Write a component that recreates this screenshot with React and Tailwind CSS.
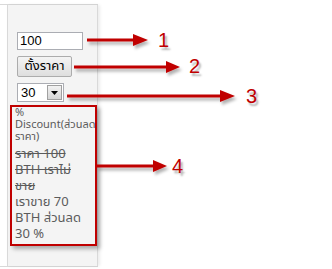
import React from "react";

const THAI = "font-['Tahoma','Noto_Sans_Thai','Noto_Sans','DejaVu_Sans',sans-serif]";

function Arrows() {
  // annotation arrows drawn over the page
  const arrows = [
    { x1: 87, x2: 135, y: 40, head: 133, tip: 148 },
    { x1: 74, x2: 168, y: 67, head: 166, tip: 180 },
    { x1: 67, x2: 222, y: 96, head: 220, tip: 235 },
    { x1: 97, x2: 155, y: 166, head: 153, tip: 167 },
  ];
  return (
    <svg className="absolute inset-0 pointer-events-none" width="332" height="269">
      <defs>
        <filter id="sh" x="-20%" y="-50%" width="140%" height="250%">
          <feDropShadow dx="2" dy="3" stdDeviation="1.5" floodColor="#000" floodOpacity="0.3" />
        </filter>
      </defs>
      {arrows.map((a, i) => (
        <g key={i} filter="url(#sh)" fill="#c00000">
          <rect x={a.x1} y={a.y - 1.5} width={a.x2 - a.x1} height="3" />
          <polygon points={`${a.head},${a.y - 6} ${a.tip},${a.y} ${a.head},${a.y + 6}`} />
        </g>
      ))}
    </svg>
  );
}

const labels = [
  { n: "1", cls: "left-[158px] top-[30px]" },
  { n: "2", cls: "left-[189px] top-[56px]" },
  { n: "3", cls: "left-[246px] top-[86px]" },
  { n: "4", cls: "left-[172px] top-[156px]" },
];

export default function App() {
  return (
    <div className="relative w-[332px] h-[269px] bg-white overflow-hidden">
      {/* table row lines */}
      <div className="mt-[4px] w-[98px] border-y border-[#d9d9d9]">
        <div className="ml-[7px] w-[91px] h-[261px] border-x border-[#d9d9d9] bg-[#f4f4f4] shadow-[2px_0_3px_rgba(0,0,0,0.08)]">
          <div className="flex flex-col pt-[27px]">
            <div className="ml-[9px] w-[66px] h-[18px] bg-white border border-[#abadb3] flex items-center pl-[2px] text-[13px] text-black font-['Liberation_Sans',sans-serif]">
              100
            </div>
            <button className={`ml-[9px] mt-[6px] w-[55px] h-[21px] rounded-[2px] border border-[#acacac] bg-gradient-to-b from-[#f4f4f4] to-[#dedede] text-[13px] text-black leading-none ${THAI}`}>
              ตั้งราคา
            </button>
            <div className="ml-[9px] mt-[6px] w-[47px] h-[19px] bg-white border border-[#abadb3] flex items-center justify-between font-['Liberation_Sans',sans-serif]">
              <span className="pl-[3px] text-[13px] text-black">30</span>
              <span className="mr-px w-[15px] h-[15px] border border-[#a0a0a0] bg-gradient-to-b from-[#f2f2f2] to-[#d5d5d5] flex items-center justify-center">
                <svg width="7" height="4" viewBox="0 0 7 4">
                  <polygon points="0,0 7,0 3.5,4" fill="#000" />
                </svg>
              </span>
            </div>
            <div className={`ml-[2px] mt-[3px] w-[87px] h-[141px] border-2 border-[#c00000] shadow-[3px_3px_4px_rgba(0,0,0,0.3)] pl-[3px] text-[#5b5b5b] ${THAI}`}>
              <div className="text-[11px] leading-[12px]">
                <div>%</div>
                <div className="whitespace-nowrap">Discount(ส่วนลด</div>
                <div>ราคา)</div>
              </div>
              <div className="mt-[3px] text-[13px] leading-[16px]">
                <div className="line-through">ราคา 100</div>
                <div className="line-through">BTH เราไม่</div>
                <div className="line-through">ขาย</div>
                <div>เราขาย 70</div>
                <div>BTH ส่วนลด</div>
                <div>30 %</div>
              </div>
            </div>
          </div>
        </div>
      </div>
      <Arrows />
      {labels.map((l) => (
        <span
          key={l.n}
          className={`absolute ${l.cls} text-[20px] leading-[20px] text-[#c00000] font-['Liberation_Sans',sans-serif] [text-shadow:2px_3px_2px_rgba(0,0,0,0.3)]`}
        >
          {l.n}
        </span>
      ))}
    </div>
  );
}
